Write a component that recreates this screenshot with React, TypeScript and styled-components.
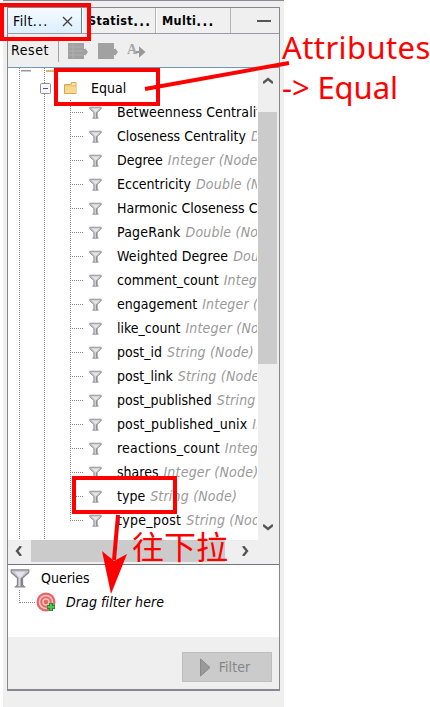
import React from "react";
import styled, { createGlobalStyle, css } from "styled-components";

const Global = createGlobalStyle`
  html, body { margin: 0; padding: 0; background: #fff; overflow: hidden; }
  * { box-sizing: border-box; }
`;
const Screen = styled.main`
  position: relative; width: 430px; height: 707px; overflow: hidden; background: #fff;
  font-family: "DejaVu Sans Condensed", "DejaVu Sans", sans-serif; font-size: 14px; font-stretch: condensed; color: #000;
`;
const Dock = styled.section`
  width: 281px; height: 707px; margin-left: 3px; padding: 6px 0 0 4px; background: #efefef;
  border-top: 1px solid #8b8b94;
`;
const Panel = styled.div`
  width: 273px; height: 684px; display: flex; flex-direction: column; background: #efefef;
  border: 1px solid #878790; border-bottom-width: 2px;
`;
const Tabs = styled.header`display: flex; height: 26px; border-bottom: 1px solid #9a9aa3; flex: none;`;
const Tab = styled.div<{ $w: number; $active?: boolean }>`
  width: ${p => p.$w}px; display: flex; align-items: center; padding: 0 0 0 5px; white-space: nowrap;
  border-right: 1px solid #b4b4b8; background: #f0f0f0; flex: none;
  ${p => p.$active
    ? css`background: linear-gradient(#f4faff, #dcefff); border-right-color: #4e8ab0; letter-spacing: .4px;`
    : css`font-weight: bold; font-size: 12.5px; letter-spacing: .4px; border-left: 1px solid #fff;`}
`;
const Dots = styled.span`letter-spacing: 1.3px; font-size: 14px;`;
const Close = styled.svg`margin: 1px 8px 0 auto;`;
const Minimise = styled.div`width: 14px; height: 2px; margin: 12px 0 0 26px; background: #555;`;
const Toolbar = styled.div`height: 34px; flex: none; display: flex; align-items: center; border-bottom: 1px solid #7199b4; padding-left: 3px;`;
const Reset = styled.span`width: 48px; height: 23px; line-height: 22px; border-right: 1px solid #a2a2a2; margin-right: 8px; letter-spacing: .6px;`;
const Tools = styled.div`display: flex; gap: 9px;`;
const Tree = styled.div`display: grid; grid-template: 472px 22px / 250px 21px; height: 494px; flex: none;`;
const Rows = styled.div`
  overflow: hidden; border-right: 1px solid #fff; background:
  repeating-linear-gradient(#888 0 1px, transparent 1px 2px) 11px 0 / 1px 100% no-repeat,
  repeating-linear-gradient(#888 0 1px, transparent 1px 2px) 36px 0 / 1px 100% no-repeat, #fff;
`;
const Peek = styled.div`height: 8px; padding-left: 5px; line-height: 0;`;
const Row = styled.div<{ $folder?: boolean; $last?: boolean }>`
  height: 24px; display: flex; align-items: center; white-space: nowrap; padding-left: ${p => p.$folder ? 31 : 62}px;
  ${p => !p.$folder && css`background: repeating-linear-gradient(#888 0 1px, transparent 1px 2px) 62px 0 / 1px ${p.$last ? "12px" : "100%"} no-repeat;`}
`;
const Branch = styled.i`width: 14px; height: 1px; flex: none; background: repeating-linear-gradient(90deg,#888 0 1px,transparent 1px 2px);`;
const Label = styled.span<{ $s?: number }>`letter-spacing: ${p => p.$s || 0}px;`;
const Kind = styled.em`color: #999; margin-left: 5px; letter-spacing: .2px;`;
const VBar = styled.div`background: #efefef; display: flex; flex-direction: column; align-items: center; padding: 1px 2px 0 0;`;
const VThumb = styled.div`width: 19px; height: 252px; background: #cbcbcb; margin: 22px 0 152px;`;
const HBar = styled.div`grid-column: 1 / 3; background: #efefef; display: flex; align-items: center;`;
const HThumb = styled.div`width: 194px; height: 22px; background: #cbcbcb; margin: 0 15px 0 0;`;
const Arrow = styled.svg<{ $m: string }>`width: 10px; height: 10px; flex: none; margin: ${p => p.$m}; fill: none; stroke: #555; stroke-width: 2.4;`;
const Queries = styled.div`height: 73px; flex: none; background: #fff; margin-top: 2px; border-top: 1px solid #75757c; padding: 1px 0 0 2px;`;
const QueryRow = styled.div<{ $child?: boolean }>`
  height: 24px; display: flex; align-items: center; gap: ${p => p.$child ? 10 : 11}px; padding-left: ${p => p.$child ? 9 : 0}px;
`;
const Elbow = styled.div`width: 16px; height: 13px; align-self: flex-start; border-left: 1px dotted #888; border-bottom: 1px dotted #888; margin-right: -9px;`;
const DragHint = styled.em`letter-spacing: .1px;`;
const Footer = styled.footer`flex: 1; display: flex; justify-content: flex-end; align-items: flex-start; padding: 15px 7px 0 0;`;
const Button = styled.button`
  width: 90px; height: 30px; border: 1px solid #bdbdbd; background: #cbcbcb; display: flex; align-items: center; justify-content: center;
  gap: 8px; padding: 0 4px 0 0; color: #858585; font: inherit; letter-spacing: .1px;
`;
const Markup = styled.svg`position: absolute; inset: 0; width: 430px; height: 707px;`;
const Note = styled.div`
  position: absolute; left: 282px; top: 27px; color: red; white-space: nowrap;
  font: 31px/40px "Noto Sans", sans-serif;
`;
const NoteLine = styled.div<{ $s: number }>`letter-spacing: ${p => p.$s}px;`;
const PullNote = styled.div`position: absolute; left: 132px; top: 522px; color: red; font: 32px/46px "Noto Sans CJK SC", sans-serif; white-space: nowrap;`;
const FunnelSvg = styled.svg`flex: none;`;
const FilterIcon = styled.div`margin: 0 15px 0 5px; display: flex;`;
const FolderIcon = styled.div`margin: 0 14px 0 12px; display: flex;`;

function Funnel({ size = 15 }: { size?: number }) {
  return <FunnelSvg width={size} height={size} viewBox="0 0 16 16">
    <path d="M1 1.5h14v2L10 8v5.5l1.5 1.5h-7L6 13.5V8L1 3.5z" fill="#c4c4c8" stroke="#85858b" />
    <path d="M3.5 3h9L8.5 7.5v7h-1v-7z" fill="#e4e4ea" /><path d="M9 8v6.5" stroke="#77777e" />
  </FunnelSvg>;
}
function Folder() {
  return <svg width="13" height="12" viewBox="0 0 13 12"><path d="M.5 2.5h6l1-2h4.5v11H.5z" fill="#ecc775" stroke="#d5a84d" /><path d="M8 2h3.5" stroke="#fff" /><path d="M1 4.5h11V11H1z" fill="#f6d98f" /></svg>;
}
function Expander() {
  return <svg width="13" height="13" viewBox="0 0 13 13"><rect x="1.5" y="1.5" width="10" height="10" rx="1" fill="#f7f7f7" stroke="#919191" /><path d="M4 6.5h5" stroke="#3e58ac" /></svg>;
}

const rows: { name: string; kind?: string; s?: number }[] = [
  { name: "Betweenness Centrality", s: .1 }, { name: "Closeness Centrality", kind: "Double (Node)" },
  { name: "Degree", kind: "Integer (Node)" }, { name: "Eccentricity", kind: "Double (Node)" },
  { name: "Harmonic Closeness Centrality" }, { name: "PageRank", kind: "Double (Node)", s: .2 },
  { name: "Weighted Degree", kind: "Double (Node)", s: .12 }, { name: "comment_count", kind: "Integer (Node)" },
  { name: "engagement", kind: "Integer (Node)" }, { name: "like_count", kind: "Integer (Node)" },
  { name: "post_id", kind: "String (Node)" }, { name: "post_link", kind: "String (Node)" },
  { name: "post_published", kind: "String (Node)" }, { name: "post_published_unix", kind: "Integer (Node)", s: .12 },
  { name: "reactions_count", kind: "Integer (Node)", s: .2 }, { name: "shares", kind: "Integer (Node)" },
  { name: "type", kind: "String (Node)" }, { name: "type_post", kind: "String (Node)", s: .3 },
];

export default function App() {
  return <Screen><Global />
    <Dock><Panel>
      <Tabs>
        <Tab $w={74} $active>Filt<Dots>...</Dots><Close width="11" height="11" viewBox="0 0 11 11"><path d="M1 1l9 9M10 1l-9 9" stroke="#444" strokeWidth="1.4" /></Close></Tab>
        <Tab $w={74}>Statist<Dots>...</Dots></Tab><Tab $w={75}>Multi<Dots>...</Dots></Tab><Minimise />
      </Tabs>
      <Toolbar><Reset>Reset</Reset><Tools>
        {[0, 1].map(n => <svg key={n} width="21" height="18" viewBox="0 0 21 18"><path d="M1 1h16v6h1V6l3 4-3 4v-1h-1v4H1z" fill="#a1a1a1" />{n === 0 && <path d="M2 5h14M2 9h14M2 13h14M6 2v14" stroke="#b0b0b0" />}</svg>)}
        <svg width="20" height="18" viewBox="0 0 20 18"><text x="0" y="12" fontFamily="Liberation Serif" fontSize="14" fontWeight="bold" fill="#a5a5a5">A</text><path d="M9 10h5M13 6.5l4 3.5-4 3.5z" stroke="#999" fill="#999" strokeWidth="2" /></svg>
      </Tools></Toolbar>
      <Tree>
        <Rows><Peek><svg width="42" height="3"><path d="M8 0h10v1.5H8z" fill="#999" /><path d="M33 0h12v2H33z" fill="#dbb76c" /></svg></Peek>
          <Row $folder><Expander /><FolderIcon><Folder /></FolderIcon><Label>Equal</Label></Row>
          {rows.map((r, i) => <Row key={r.name} $last={i === rows.length - 1}><Branch /><FilterIcon><Funnel size={13} /></FilterIcon><Label $s={r.s}>{r.name}</Label>{r.kind && <Kind>{r.kind}</Kind>}</Row>)}
        </Rows>
        <VBar><Arrow $m="7px 0 4px" viewBox="0 0 10 10"><path d="M0 7l5-4 5 4" /></Arrow><VThumb /><Arrow $m="6px 0" viewBox="0 0 10 10"><path d="M0 3l5 4 5-4" /></Arrow></VBar>
        <HBar><Arrow $m="0 7px 0 6px" viewBox="0 0 10 10"><path d="M7 0L3 5l4 5" /></Arrow><HThumb /><Arrow $m="0" viewBox="0 0 10 10"><path d="M3 0l4 5-4 5" /></Arrow></HBar>
      </Tree>
      <Queries>
        <QueryRow><Funnel size={20} />Queries</QueryRow>
        <QueryRow $child><Elbow /><svg width="20" height="20" viewBox="0 0 20 20"><circle cx="10" cy="10" r="9.5" fill="#e66566" /><g fill="none" stroke="#f9c5c5" strokeWidth="1.5"><circle cx="10" cy="10" r="6.5" /><circle cx="10" cy="10" r="3" /></g><path d="M11 15h8M15 11v8" stroke="#208a2b" strokeWidth="4" /><path d="M11.7 15h6.6M15 11.7v6.6" stroke="#4cc653" strokeWidth="2" /></svg><DragHint>Drag filter here</DragHint></QueryRow>
      </Queries>
      <Footer><Button><svg width="11" height="19" viewBox="0 0 11 19"><path d="M.5 1v17L10 9.5z" fill="#999" stroke="#888" /></svg>Filter</Button></Footer>
    </Panel></Dock>
    <Markup viewBox="0 0 430 707" fill="none" stroke="#f00" strokeWidth="4">
      <path d="M2 5h87v34H2zM56 70h102v34H56zM74 478h101v34H74zM145 89L289 63M118 515l-4 45" />
      <path d="M102 551l9 43 16-40-13 7z" fill="red" stroke="none" />
    </Markup>
    <Note><NoteLine $s={.4}>Attributes</NoteLine><NoteLine $s={-.1}>-&gt; Equal</NoteLine></Note><PullNote>往下拉</PullNote>
  </Screen>;
}
